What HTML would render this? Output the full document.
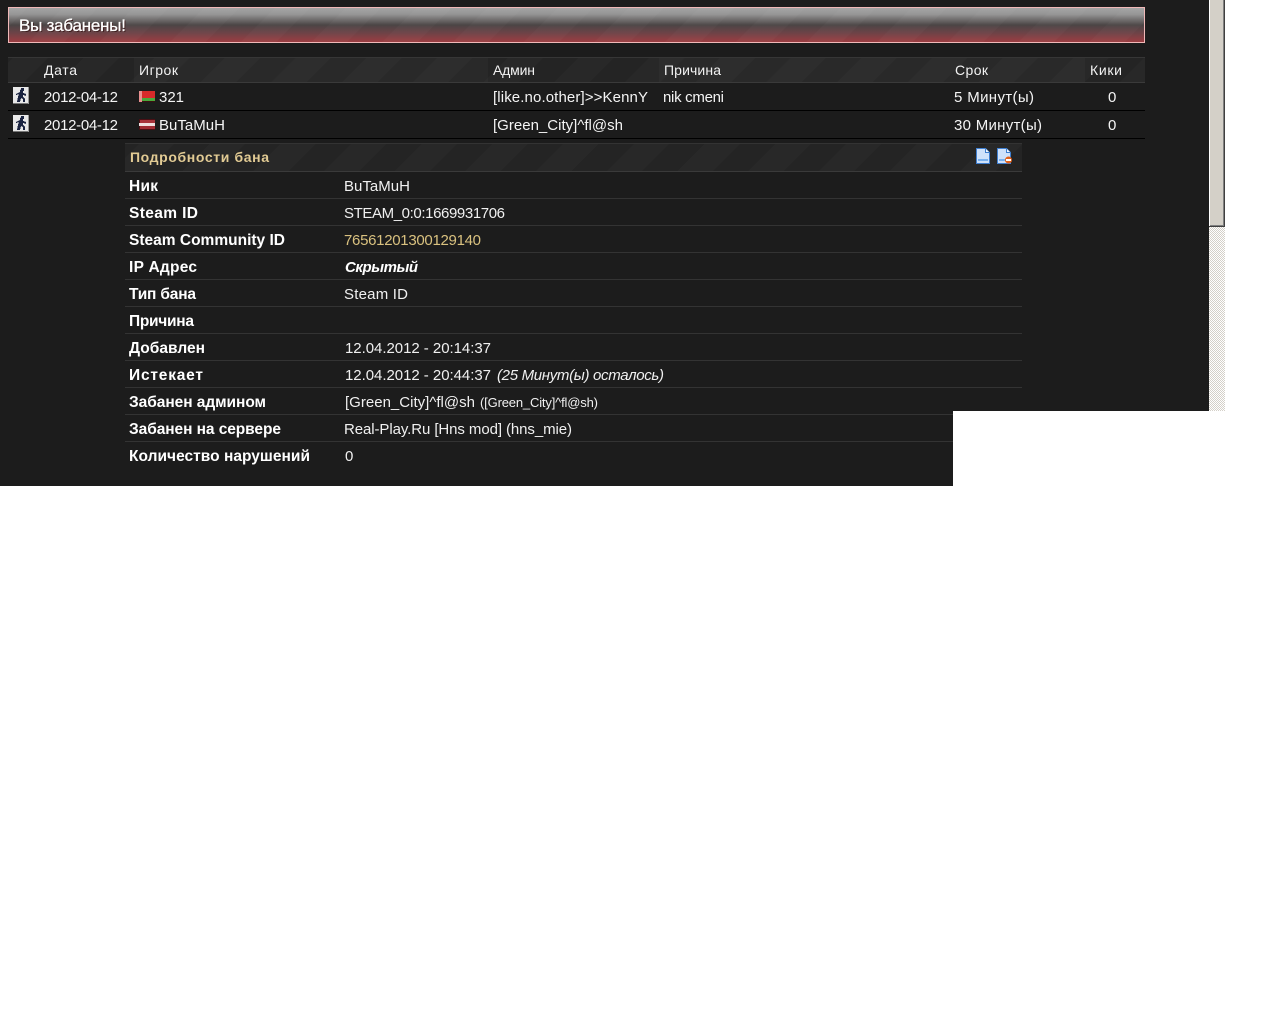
<!DOCTYPE html>
<html lang="ru">
<head>
<meta charset="utf-8">
<title>Вы забанены!</title>
<style>
html,body{margin:0;padding:0;background:#fff;overflow:hidden}
svg{display:block}
text{font-family:"Liberation Sans","DejaVu Sans",sans-serif;fill:#fff;white-space:pre}
.h{font-size:14px;fill:#f2f2f2}
.c{font-size:15px;fill:#f4f4f4}
.l{font-size:15.5px;font-weight:bold;fill:#fff}
.v{font-size:15px;fill:#f0f0f0}
.cr{shape-rendering:crispEdges}
</style>
</head>
<body>
<svg width="1280" height="1024" viewBox="0 0 1280 1024" xmlns="http://www.w3.org/2000/svg">
<defs>
<linearGradient id="bn" x1="0" y1="0" x2="0" y2="1">
<stop offset="0" stop-color="#a3a3a3"/><stop offset=".18" stop-color="#959595"/>
<stop offset=".5" stop-color="#4b4545"/><stop offset=".72" stop-color="#6b4347"/>
<stop offset="1" stop-color="#9c3d42"/>
</linearGradient>
<pattern id="st" width="50" height="50" patternUnits="userSpaceOnUse" patternTransform="rotate(45)">
<rect width="50" height="50" fill="#292929"/><rect width="25" height="50" fill="#2d2d2d"/>
</pattern>
<pattern id="st2" width="50" height="50" patternUnits="userSpaceOnUse" patternTransform="rotate(45)">
<rect width="50" height="50" fill="#242424"/><rect width="25" height="50" fill="#282828"/>
</pattern>
<pattern id="bs" width="50" height="50" patternUnits="userSpaceOnUse" patternTransform="rotate(45)">
<rect width="25" height="50" fill="#fff" fill-opacity=".025"/>
</pattern>
<pattern id="ck" width="2" height="2" patternUnits="userSpaceOnUse">
<rect width="2" height="2" fill="#fff"/><rect width="1" height="1" fill="#d4d0c8"/><rect x="1" y="1" width="1" height="1" fill="#d4d0c8"/>
</pattern>
<g id="cs" class="cr">
<rect x="0" y="0" width="16" height="17" fill="#e8e8e8"/>
<rect x="0" y="16" width="16" height="1" fill="#777"/><rect x="15" y="0" width="1" height="17" fill="#999"/>
<path d="M8 1h3v3h-1v2l3 1v2l-3-1v2l2 2v3h-2v-3l-2-1-1 4H4l1-5 1-3-3 1V7l4-2V3l1-1z" fill="#1a2340"/>
</g>
<g id="doc">
<path d="M.5.5h9l4 4v11H.5z" fill="#cfe2fb" stroke="#3f7fd0"/>
<path d="M9.5.5v4h4" fill="#f2f7ff" stroke="#3f7fd0"/>
<rect x="2" y="11" width="10" height="2" fill="#79b1ee"/>
</g>
</defs>

<!-- backgrounds -->
<rect class="cr" x="0" y="0" width="1209" height="411" fill="#1c1c1c"/>
<rect class="cr" x="0" y="411" width="953" height="75" fill="#1c1c1c"/>

<!-- scrollbar -->
<rect class="cr" x="1209" y="227" width="16" height="184" fill="url(#ck)"/>
<rect class="cr" x="1209" y="0" width="16" height="227" fill="#404040"/>
<rect class="cr" x="1209" y="0" width="15" height="226" fill="#fff"/>
<rect class="cr" x="1210" y="0" width="13" height="225" fill="#d4d0c8"/>
<rect class="cr" x="1223" y="0" width="1" height="226" fill="#808080"/>
<rect class="cr" x="1210" y="225" width="14" height="1" fill="#808080"/>

<!-- banner -->
<rect class="cr" x="8" y="7" width="1137" height="36" fill="#f0b8b8"/>
<rect class="cr" x="9" y="8" width="1135" height="34" fill="url(#bn)"/>
<rect class="cr" x="9" y="8" width="1135" height="34" fill="url(#bs)"/>
<text x="20" y="32" style="font-size:17px;fill:#3a1a1a" textLength="107">Вы забанены!</text>
<text x="19" y="31" style="font-size:17px;stroke:#fff;stroke-width:.3px" textLength="107">Вы забанены!</text>

<!-- table head -->
<rect x="8" y="57" width="1137" height="26" fill="url(#st2)"/>
<rect x="134" y="58" width="354" height="24" fill="url(#st)"/>
<rect x="488" y="58" width="171" height="24" fill="url(#st2)"/>
<rect x="659" y="58" width="291" height="24" fill="url(#st)"/>
<rect x="950" y="58" width="135" height="24" fill="url(#st)"/>
<rect x="1085" y="58" width="60" height="24" fill="url(#st2)"/>
<rect class="cr" x="8" y="57" width="1137" height="1" fill="#363636"/>
<rect class="cr" x="8" y="82" width="1137" height="1" fill="#3a3a3a"/>
<text class="h" x="44" y="75" textLength="33">Дата</text>
<text class="h" x="139" y="75" textLength="39">Игрок</text>
<text class="h" x="493" y="75" textLength="42">Админ</text>
<text class="h" x="664" y="75" textLength="57">Причина</text>
<text class="h" x="955" y="75" textLength="33">Срок</text>
<text class="h" x="1090" y="75" textLength="32">Кики</text>

<!-- rows -->
<rect class="cr" x="8" y="110" width="1137" height="1" fill="#000"/>
<rect class="cr" x="8" y="138" width="1137" height="1" fill="#000"/>
<use href="#cs" x="13" y="87"/>
<use href="#cs" x="13" y="115"/>

<g class="cr">
<rect x="139" y="91" width="16" height="11" fill="#3d1010"/>
<rect x="140" y="91" width="15" height="7" fill="#d62a2a"/>
<rect x="140" y="98" width="15" height="3" fill="#4aa83c"/>
<rect x="139" y="91" width="3" height="11" fill="#e89090"/>
<rect x="139" y="119" width="16" height="11" fill="#4a0f14"/>
<rect x="140" y="120" width="15" height="3" fill="#a8323a"/>
<rect x="139" y="123" width="16" height="3" fill="#f0dede"/>
<rect x="140" y="126" width="15" height="3" fill="#a02c34"/>
</g>

<text class="c" x="44" y="102" textLength="74">2012-04-12</text>
<text class="c" x="159" y="102" textLength="25">321</text>
<text class="c" x="493" y="102" textLength="155">[like.no.other]&gt;&gt;KennY</text>
<text class="c" x="663" y="102" textLength="61">nik cmeni</text>
<text class="c" x="954" y="102" textLength="80">5 Минут(ы)</text>
<text class="c" x="1108" y="102" textLength="8">0</text>

<text class="c" x="44" y="130" textLength="74">2012-04-12</text>
<text class="c" x="159" y="130" textLength="66">BuTaMuH</text>
<text class="c" x="493" y="130" textLength="130">[Green_City]^fl@sh</text>
<text class="c" x="954" y="130" textLength="88">30 Минут(ы)</text>
<text class="c" x="1108" y="130" textLength="8">0</text>

<!-- details head -->
<rect x="125" y="143" width="897" height="29" fill="url(#st2)"/>
<rect class="cr" x="125" y="143" width="897" height="1" fill="#333"/>
<rect class="cr" x="125" y="171" width="897" height="1" fill="#3a3a3a"/>
<text x="130" y="162" style="fill:#e2cb94;font-size:14px;font-weight:bold" textLength="139">Подробности бана</text>
<use href="#doc" x="976" y="148"/>
<use href="#doc" x="997" y="148"/>
<circle cx="1008.500" cy="160" r="3.500" fill="#e0601a"/>
<rect class="cr" x="1006" y="159" width="5" height="2" fill="#fff"/>

<!-- detail lines -->
<g class="cr" fill="#333">
<rect x="125" y="198" width="897" height="1"/>
<rect x="125" y="225" width="897" height="1"/>
<rect x="125" y="252" width="897" height="1"/>
<rect x="125" y="279" width="897" height="1"/>
<rect x="125" y="306" width="897" height="1"/>
<rect x="125" y="333" width="897" height="1"/>
<rect x="125" y="360" width="897" height="1"/>
<rect x="125" y="387" width="897" height="1"/>
<rect x="125" y="414" width="828" height="1"/>
<rect x="125" y="441" width="828" height="1"/>
</g>

<!-- labels -->
<text class="l" x="129" y="191" textLength="29">Ник</text>
<text class="l" x="129" y="218" textLength="69">Steam ID</text>
<text class="l" x="129" y="245" textLength="156">Steam Community ID</text>
<text class="l" x="129" y="272" textLength="68">IP Адрес</text>
<text class="l" x="129" y="299" textLength="67">Тип бана</text>
<text class="l" x="129" y="326" textLength="65">Причина</text>
<text class="l" x="129" y="353" textLength="76">Добавлен</text>
<text class="l" x="129" y="380" textLength="74">Истекает</text>
<text class="l" x="129" y="407" textLength="137">Забанен админом</text>
<text class="l" x="129" y="434" textLength="152">Забанен на сервере</text>
<text class="l" x="129" y="461" textLength="181">Количество нарушений</text>

<!-- values -->
<text class="v" x="344" y="191" textLength="66">BuTaMuH</text>
<text class="v" x="344" y="218" textLength="161">STEAM_0:0:1669931706</text>
<text class="v" x="344" y="245" style="fill:#d9c17f" textLength="137">76561201300129140</text>
<text class="v" x="345" y="272" style="font-style:italic;font-weight:bold;fill:#fff" textLength="73">Скрытый</text>
<text class="v" x="344" y="299" textLength="64">Steam ID</text>
<text class="v" x="345" y="353" textLength="146">12.04.2012 - 20:14:37</text>
<text class="v" x="345" y="380" textLength="146">12.04.2012 - 20:44:37</text>
<text class="v" x="497" y="380" style="font-style:italic" textLength="167">(25 Минут(ы) осталось)</text>
<text class="v" x="345" y="407" textLength="130">[Green_City]^fl@sh</text>
<text class="v" x="480" y="407" style="font-size:13px" textLength="118">([Green_City]^fl@sh)</text>
<text class="v" x="344" y="434" textLength="228">Real-Play.Ru [Hns mod] (hns_mie)</text>
<text class="v" x="345" y="461" textLength="8">0</text>
</svg>
</body>
</html>
